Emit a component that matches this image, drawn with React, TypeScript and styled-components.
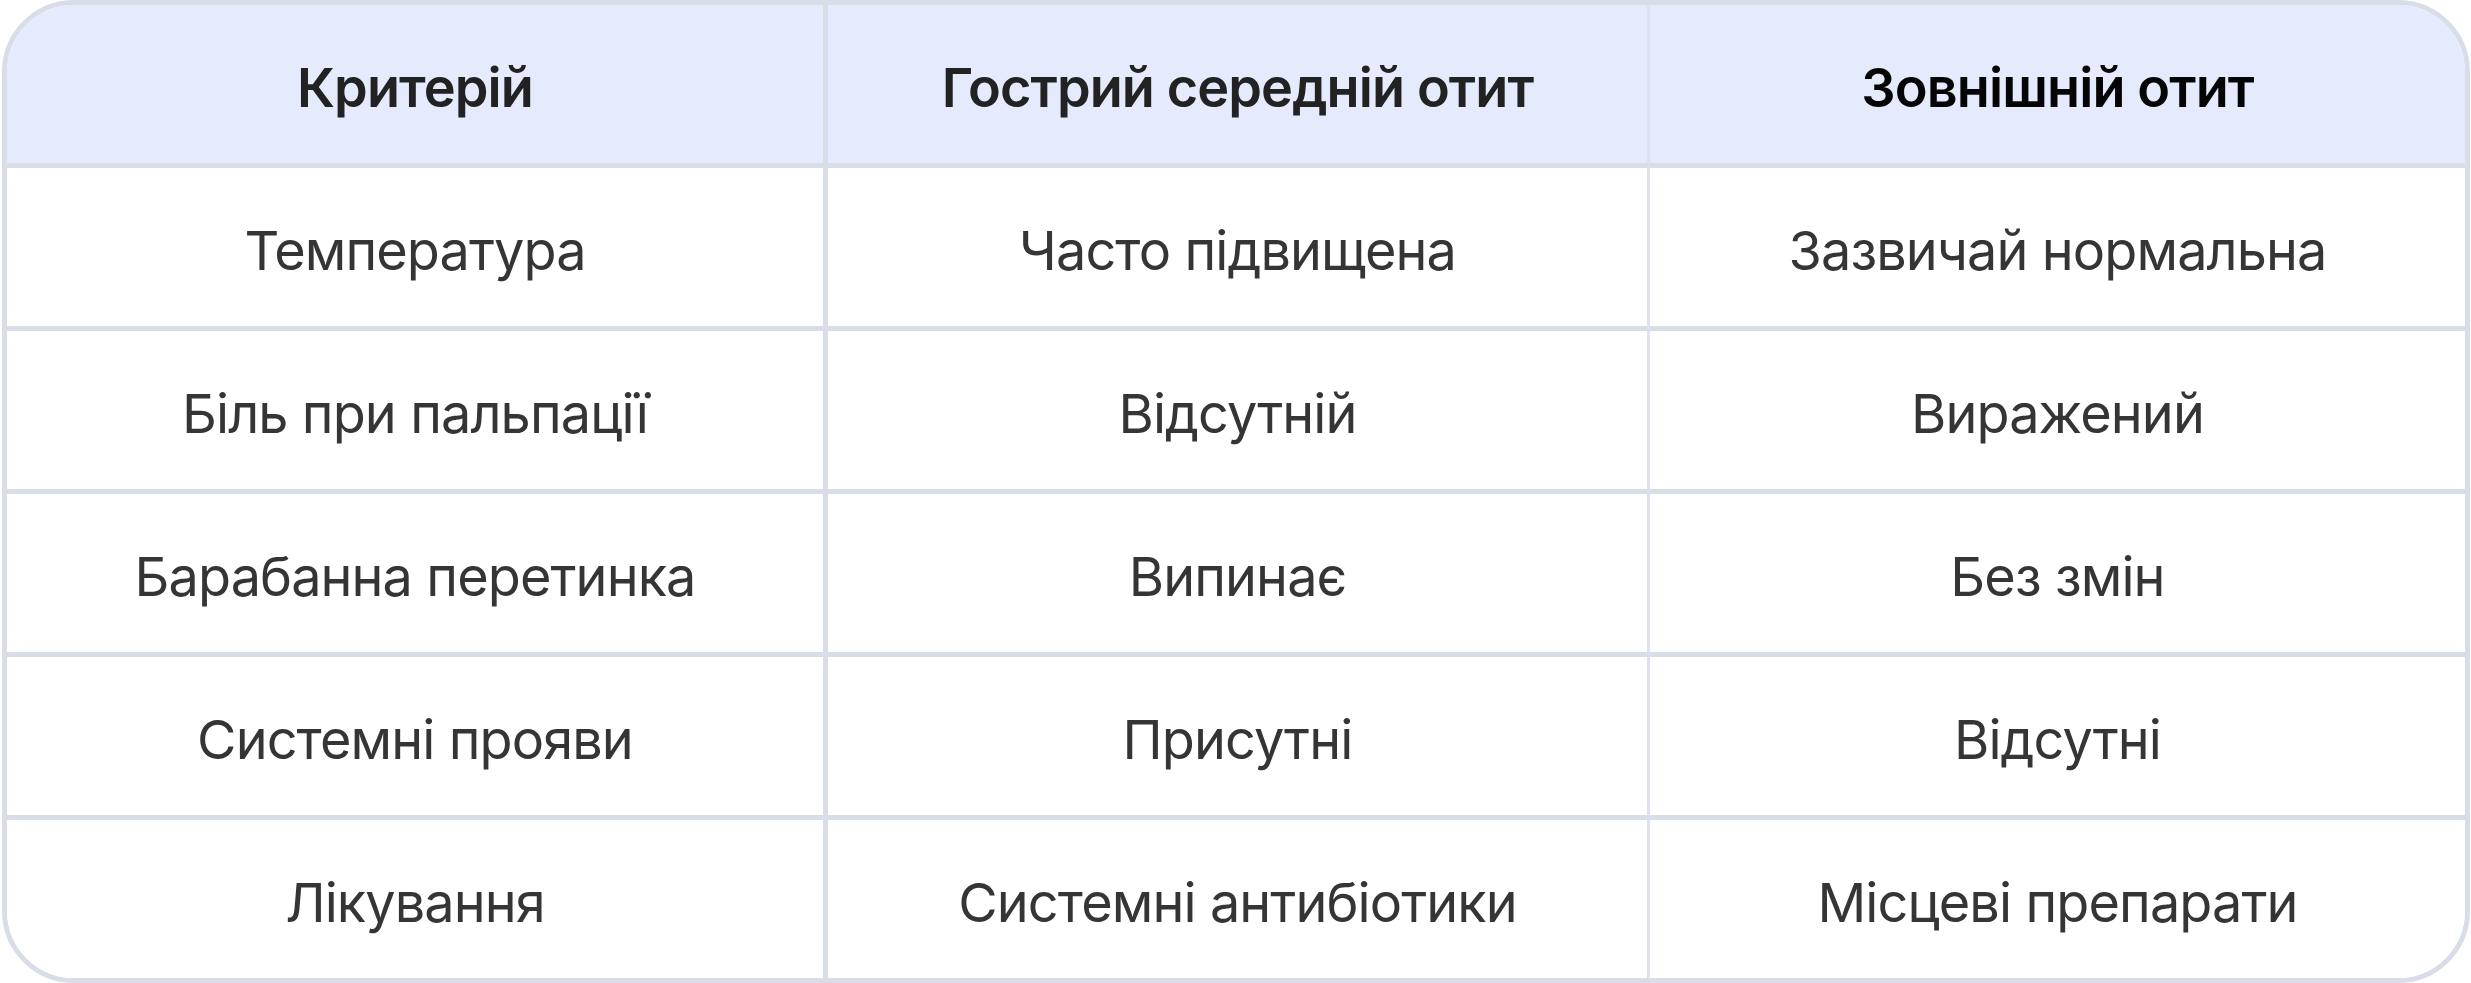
import React from "react";
import styled, { createGlobalStyle } from "styled-components";

const GlobalStyle = createGlobalStyle`
  html, body { margin: 0; padding: 0; background: #ffffff; }
  body { font-family: Inter, "Noto Sans", "Liberation Sans", sans-serif; }
`;

const Page = styled.div`
  padding: 0 1px 0 2px;
  width: 2471px;
  box-sizing: border-box;
`;

const Table = styled.div`
  display: grid;
  grid-template-columns: 821px 822px 1fr;
  border: 5px solid #d9dde8;
  border-radius: 72px;
  overflow: hidden;
  background: #ffffff;
`;

const Cell = styled.div<{ $head?: boolean; $col: number; $last?: boolean; $strong?: boolean }>`
  display: flex;
  align-items: center;
  justify-content: center;
  padding-top: 6px;
  height: 152px;
  text-align: center;
  font-size: 54px;
  letter-spacing: -0.9px;
  font-weight: ${({ $head }) => ($head ? 600 : 400)};
  color: ${({ $head, $strong }) => ($strong ? "#050505" : $head ? "#222222" : "#353535")};
  background: ${({ $head }) => ($head ? "#e5ebfd" : "#ffffff")};
  border-bottom: ${({ $last }) => ($last ? "none" : "5px solid #d9dde8")};
  border-right: ${({ $col }) =>
    $col === 0 ? "5px solid #d9dde8" : $col === 1 ? "3px solid #dfe2ee" : "none"};
`;

const head = ["Критерій", "Гострий середній отит", "Зовнішній отит"];

const rows = [
  ["Температура", "Часто підвищена", "Зазвичай нормальна"],
  ["Біль при пальпації", "Відсутній", "Виражений"],
  ["Барабанна перетинка", "Випинає", "Без змін"],
  ["Системні прояви", "Присутні", "Відсутні"],
  ["Лікування", "Системні антибіотики", "Місцеві препарати"],
];

export default function App() {
  return (
    <Page>
      <GlobalStyle />
      <Table>
        {head.map((h, i) => (
          <Cell key={h} $head $col={i} $strong={i === 2}>
            {h}
          </Cell>
        ))}
        {rows.map((r, ri) =>
          r.map((c, ci) => (
            <Cell key={`${ri}-${ci}`} $col={ci} $last={ri === rows.length - 1}>
              {c}
            </Cell>
          ))
        )}
      </Table>
    </Page>
  );
}
